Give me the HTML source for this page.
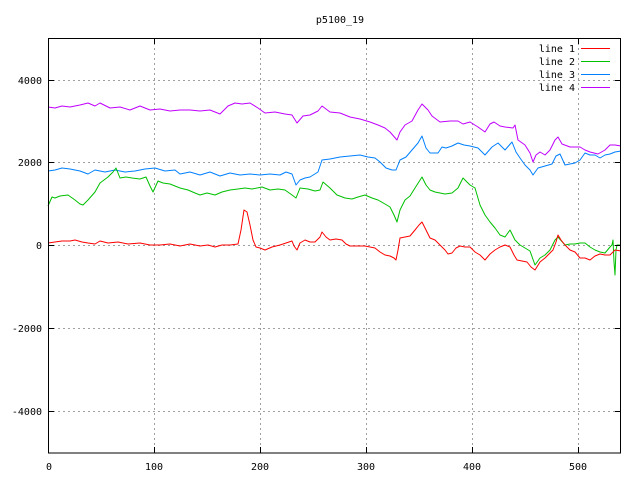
<!DOCTYPE html>
<html><head><meta charset="utf-8"><style>
html,body{margin:0;padding:0;background:#fff;width:640px;height:480px;overflow:hidden}
svg{display:block}
text{font-family:"DejaVu Sans Mono","Liberation Mono",monospace;font-size:10px;fill:#000}
</style></head><body>
<svg width="640" height="480" viewBox="0 0 640 480" xmlns="http://www.w3.org/2000/svg">
<g stroke="#a0a0a0" stroke-width="1" stroke-dasharray="2,3" fill="none">
<line x1="48" y1="80.5" x2="621" y2="80.5"/>
<line x1="48" y1="162.5" x2="621" y2="162.5"/>
<line x1="48" y1="245.5" x2="621" y2="245.5"/>
<line x1="48" y1="328.5" x2="621" y2="328.5"/>
<line x1="48" y1="411.5" x2="621" y2="411.5"/>
<line x1="154.5" y1="38" x2="154.5" y2="453"/>
<line x1="260.5" y1="38" x2="260.5" y2="453"/>
<line x1="366.5" y1="38" x2="366.5" y2="453"/>
<line x1="472.5" y1="38" x2="472.5" y2="453"/>
<line x1="578.5" y1="38" x2="578.5" y2="453"/>
</g>
<g fill="none" stroke-width="1" stroke-linejoin="round">
<polyline stroke="#c000ff" points="48,107 55,108 62,106 70,107 80,105 88,103 95,106 100,103 110,108 120,107 130,110 140,106 150,110 160,109 170,111 180,110 190,110 200,111 210,110 220,114 228,106 235,103 242,104 250,103 258,108 265,113 275,112 285,114 292,115 297,123 303,116 310,115 318,111 322,106 330,112 340,113 350,117 360,119 370,122 378,125 385,128 390,132 397,140 400,132 405,125 412,121 418,110 422,104 428,110 432,116 440,122 450,121 458,121 463,124 470,122 478,127 485,132 490,124 494,122 500,126 505,127 513,128 515,125 518,140 525,145 530,153 533,162 536,155 540,152 545,155 550,150 555,140 558,137 562,144 570,147 580,147 585,150 590,152 598,154 605,150 610,145 615,145 621,146"/>
<polyline stroke="#0080ff" points="48,171 55,170 62,168 70,169 80,171 88,174 95,170 105,172 115,170 125,172 135,171 145,169 155,168 165,171 175,170 180,174 190,172 200,175 210,172 220,176 230,173 240,175 250,174 260,175 270,174 280,175 286,172 292,174 296,185 300,180 305,178 310,177 318,172 322,160 330,159 340,157 350,156 360,155 368,157 375,158 380,162 386,168 392,170 396,170 400,160 406,157 412,150 418,143 422,136 426,148 430,153 438,153 442,147 446,148 452,146 458,143 464,145 470,146 478,148 485,155 492,147 498,143 505,150 512,142 516,152 520,158 525,165 530,170 533,175 538,168 545,166 552,164 556,156 560,154 565,165 570,164 575,163 580,160 585,153 590,155 595,155 600,158 605,155 610,154 615,152 621,151"/>
<polyline stroke="#00c000" points="48,206 52,197 55,198 60,196 68,195 75,200 80,204 83,205 88,200 95,192 100,183 108,177 113,172 116,168 120,178 126,177 132,178 140,179 146,177 150,186 153,192 158,181 163,183 170,184 180,188 188,190 195,193 200,195 207,193 215,195 222,192 230,190 238,189 245,188 252,189 262,187 270,190 278,189 285,190 292,195 296,198 300,188 308,189 315,191 320,190 323,182 330,188 337,195 345,198 352,199 358,197 365,195 372,198 378,200 385,204 390,207 394,215 397,222 400,210 405,200 410,196 415,188 422,177 426,185 430,190 435,192 440,193 445,194 452,193 458,188 463,178 470,185 475,188 480,205 485,215 490,222 495,228 500,235 505,237 510,230 515,240 520,245 525,248 530,251 535,265 540,258 545,255 550,250 555,240 558,237 565,245 570,244 575,244 580,243 585,243 590,247 595,250 600,252 605,253 610,247 612,245 613,240 614,262 615,275 616,250 617,245 621,245"/>
<polyline stroke="#ff0000" points="48,243 55,242 62,241 70,241 75,240 82,242 88,243 95,244 100,241 108,243 118,242 128,244 140,243 150,245 160,245 170,244 180,246 190,244 200,246 208,245 215,247 222,245 230,245 238,244 241,230 244,210 247,212 250,225 253,240 256,247 260,248 265,250 272,247 280,245 286,243 292,241 294,246 297,250 300,243 305,240 310,242 315,242 320,237 322,232 326,237 330,240 336,239 342,240 346,244 350,246 358,246 365,246 370,247 375,248 380,252 385,255 390,256 394,258 396,260 398,250 400,238 405,237 410,236 415,230 419,225 422,222 425,228 430,238 435,240 440,245 445,250 448,254 452,253 456,248 460,246 465,247 470,247 475,252 480,255 485,260 490,254 495,250 500,247 505,245 510,247 514,255 517,260 522,261 527,262 531,267 535,270 540,262 545,258 549,254 553,250 556,242 558,235 561,240 565,245 570,250 575,252 580,258 585,258 590,260 595,256 600,254 605,255 610,255 615,250 621,251"/>
</g>
<rect x="48.5" y="38.5" width="572" height="414.5" fill="none" stroke="#000" stroke-width="1"/>
<g stroke="#000" stroke-width="1">
<line x1="48" y1="80.5" x2="54" y2="80.5"/><line x1="615" y1="80.5" x2="621" y2="80.5"/>
<line x1="48" y1="162.5" x2="54" y2="162.5"/><line x1="615" y1="162.5" x2="621" y2="162.5"/>
<line x1="48" y1="245.5" x2="54" y2="245.5"/><line x1="615" y1="245.5" x2="621" y2="245.5"/>
<line x1="48" y1="328.5" x2="54" y2="328.5"/><line x1="615" y1="328.5" x2="621" y2="328.5"/>
<line x1="48" y1="411.5" x2="54" y2="411.5"/><line x1="615" y1="411.5" x2="621" y2="411.5"/>
<line x1="154.5" y1="453" x2="154.5" y2="447"/><line x1="154.5" y1="38" x2="154.5" y2="44"/>
<line x1="260.5" y1="453" x2="260.5" y2="447"/><line x1="260.5" y1="38" x2="260.5" y2="44"/>
<line x1="366.5" y1="453" x2="366.5" y2="447"/><line x1="366.5" y1="38" x2="366.5" y2="44"/>
<line x1="472.5" y1="453" x2="472.5" y2="447"/><line x1="472.5" y1="38" x2="472.5" y2="44"/>
<line x1="578.5" y1="453" x2="578.5" y2="447"/><line x1="578.5" y1="38" x2="578.5" y2="44"/>
</g>
<text x="340" y="23" text-anchor="middle">p5100_19</text>
<g text-anchor="end">
<text x="42" y="84">4000</text>
<text x="42" y="166">2000</text>
<text x="42" y="249">0</text>
<text x="42" y="332">-2000</text>
<text x="42" y="415">-4000</text>
</g>
<g text-anchor="middle">
<text x="49" y="470">0</text>
<text x="154" y="470">100</text>
<text x="260" y="470">200</text>
<text x="366" y="470">300</text>
<text x="472" y="470">400</text>
<text x="578" y="470">500</text>
</g>
<g text-anchor="end">
<text x="575" y="52">line 1</text>
<text x="575" y="65">line 2</text>
<text x="575" y="78">line 3</text>
<text x="575" y="91">line 4</text>
</g>
<line x1="581" y1="48.5" x2="610" y2="48.5" stroke="#ff0000"/>
<line x1="581" y1="61.5" x2="610" y2="61.5" stroke="#00c000"/>
<line x1="581" y1="74.5" x2="610" y2="74.5" stroke="#0080ff"/>
<line x1="581" y1="87.5" x2="610" y2="87.5" stroke="#c000ff"/>
</svg>
</body></html>
